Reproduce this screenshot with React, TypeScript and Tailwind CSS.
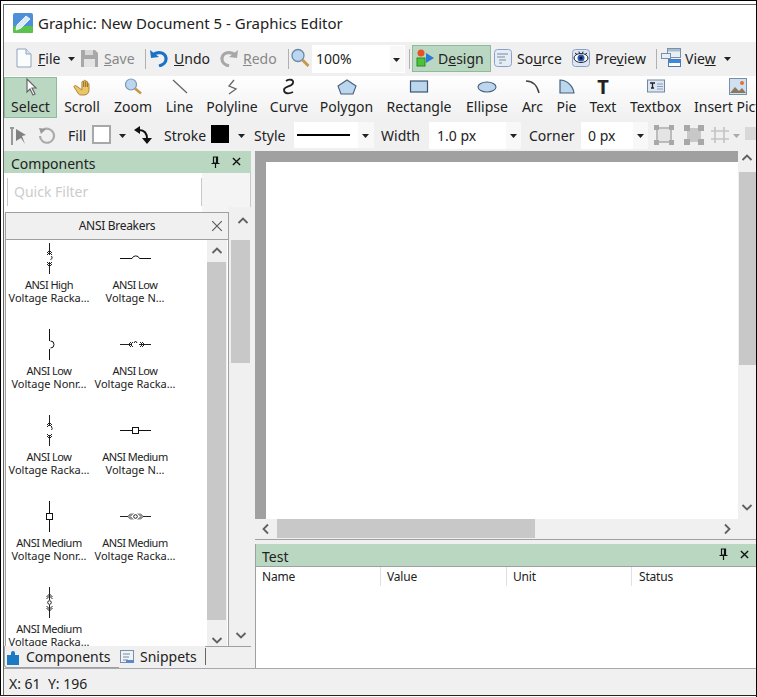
import React from "react";

const Chevron = ({ d, className }: { d: "u" | "d" | "l" | "r"; className: string }) => {
  const p = { u: "1.5,8 6,3.5 10.5,8", d: "1.5,4 6,8.5 10.5,4", l: "8,1.5 3.5,6 8,10.5", r: "4,1.5 8.5,6 4,10.5" }[d];
  return (
    <svg viewBox="0 0 12 12" className={"absolute w-[12px] h-[12px] " + className}>
      <polyline points={p} fill="none" stroke="#606060" strokeWidth="1.800" />
    </svg>
  );
};

const Caret = ({ className, color = "#222" }: { className: string; color?: string }) => (
  <svg viewBox="0 0 7 4" className={"absolute w-[7px] h-[4px] " + className}>
    <polygon points="0,0 7,0 3.500,4" fill={color} />
  </svg>
);

const Sep = ({ className }: { className: string }) => (
  <div className={"absolute w-px bg-[#b0b0b0] " + className} />
);

const Pin = ({ className }: { className: string }) => (
  <svg viewBox="0 0 9 12" className={"absolute w-[9px] h-[12px] " + className}>
    <path d="M2.500 1h4v6h-4zM5.500 1v6M0.500 7.500h8M4.500 8v4" fill="none" stroke="#111" strokeWidth="1.200" />
  </svg>
);

const Cross = ({ className, color = "#111", w = 1.5 }: { className: string; color?: string; w?: number }) => (
  <svg viewBox="0 0 10 10" className={"absolute " + className}>
    <path d="M1 1l8 8M9 1l-8 8" stroke={color} strokeWidth={w} fill="none" />
  </svg>
);

const tools = [
  { t: "Select", w: "w-[53px]", i: <svg viewBox="0 0 18 18" className="w-[18px] h-[18px]"><path d="M5 1v13l3-3 3 6 2-1-3-6h4z" fill="#fff" stroke="#666" strokeWidth="1.200" /></svg> },
  { t: "Scroll", w: "w-[50px]", i: <svg viewBox="0 0 18 18" className="w-[18px] h-[18px]"><path d="M1 9l4 6c1 2 2 2 4 2h2c3 0 5-2 5-5V6c0-1-1.500-1-1.500 0v3-5c0-1-1.800-1-1.800 0v5-6c0-1-2-1-2 0v6-5c0-1-1.800-1-1.800 0v8L3.500 8C2.500 7 0.500 8 1 9z" fill="#ecc566" stroke="#9a7428" strokeWidth="0.800" /></svg> },
  { t: "Zoom", w: "w-[52px]", i: <svg viewBox="0 0 20 18" className="w-[20px] h-[18px]"><circle cx="8" cy="6.500" r="5.500" fill="#bcd6f0" stroke="#7a98b8" strokeWidth="1.200" /><path d="M12 10.500l6 5" stroke="#c49a4a" strokeWidth="2.600" /></svg> },
  { t: "Line", w: "w-[41px]", i: <svg viewBox="0 0 18 18" className="w-[18px] h-[18px]"><path d="M2 2l14 13" stroke="#666" strokeWidth="1.300" /></svg> },
  { t: "Polyline", w: "w-[64px]", i: <svg viewBox="0 0 18 18" className="w-[18px] h-[18px]"><path d="M11 2L6 8l7 3-7 5" fill="none" stroke="#666" strokeWidth="1.300" /></svg> },
  { t: "Curve", w: "w-[50px]", i: <svg viewBox="0 0 18 18" className="w-[18px] h-[18px]"><path d="M6 3c3-2 8-2 7 2s-9 3-9 7 5 4 9 2" fill="none" stroke="#222" strokeWidth="1.800" /></svg> },
  { t: "Polygon", w: "w-[65px]", i: <svg viewBox="0 0 20 18" className="w-[20px] h-[18px]"><path d="M10 2l9 6-3 8H4L1 8z" fill="#bcd6ee" stroke="#44607e" strokeWidth="1.100" /></svg> },
  { t: "Rectangle", w: "w-[80px]", i: <svg viewBox="0 0 20 18" className="w-[20px] h-[18px]"><rect x="1.500" y="3" width="17" height="11" fill="#bcd6ee" stroke="#3c546e" strokeWidth="1.200" /></svg> },
  { t: "Ellipse", w: "w-[56px]", i: <svg viewBox="0 0 20 18" className="w-[20px] h-[18px]"><ellipse cx="10" cy="9" rx="9" ry="5" fill="#bcd6ee" stroke="#44607e" strokeWidth="1.100" /></svg> },
  { t: "Arc", w: "w-[35px]", i: <svg viewBox="0 0 18 18" className="w-[18px] h-[18px]"><path d="M2 3c6 0 11 4 13 12" fill="none" stroke="#444" strokeWidth="1.500" /></svg> },
  { t: "Pie", w: "w-[33px]", i: <svg viewBox="0 0 18 18" className="w-[18px] h-[18px]"><path d="M2 2c7 0 13 6 14 13H2z" fill="#bcd6ee" stroke="#44607e" strokeWidth="1.200" /></svg> },
  { t: "Text", w: "w-[40px]", i: <span className="w-[18px] h-[18px] flex items-center justify-center font-['Liberation_Serif',serif] font-bold text-[20px] leading-[18px] text-[#222]">T</span> },
  { t: "Textbox", w: "w-[65px]", i: <svg viewBox="0 0 20 18" className="w-[20px] h-[18px]"><rect x="1.500" y="2" width="17" height="12" fill="#dbe6f2" stroke="#70889e" /><path d="M4 5h5M6.500 5v5M5 10h3" stroke="#222" strokeWidth="1.300" /><path d="M11 6h6M11 8.500h6M11 11h6" stroke="#8aa0b8" /></svg> },
];

const items = [
  ["ANSI High", "Voltage Racka…"],
  ["ANSI Low", "Voltage N…"],
  ["ANSI Low", "Voltage Nonr…"],
  ["ANSI Low", "Voltage Racka…"],
  ["ANSI Low", "Voltage Racka…"],
  ["ANSI Medium", "Voltage N…"],
  ["ANSI Medium", "Voltage Nonr…"],
  ["ANSI Medium", "Voltage Racka…"],
  ["ANSI Medium", "Voltage Racka…"],
];

const Sym = ({ n }: { n: number }) => {
  const body: Record<number, React.ReactNode> = {
    0: <path d="M17.500 1v12M17.500 20v12M15 11l2.500-2.500L20 11M15 13l2.500-2.500L20 13M15 20l2.500 2.500L20 20M15 22l2.500 2.500L20 22M19.500 14q2 2-1 4" fill="none" stroke="#222" strokeWidth="1" />,
    1: <path d="M2 16.500h12a4 4 0 0 1 7.500 0H33" fill="none" stroke="#111" strokeWidth="1" />,
    2: <path d="M17.500 1v12M17.500 21v11M18.500 13a3.500 3.500 0 0 1 0 7" fill="none" stroke="#111" strokeWidth="1" />,
    3: <path d="M2 16.500h12M21 16.500h12M13 14l-2.500 2.500L13 19M15 14l-2.500 2.500L15 19M22 14l2.500 2.500L22 19M24 14l2.500 2.500L24 19M16 15l1.500-2 1.500 2" fill="none" stroke="#222" strokeWidth="1" />,
    4: <path d="M17.500 1v11M17.500 21v11M15 11l2.500-2.500L20 11M15 13l2.500-2.500L20 13M15 20l2.500 2.500L20 20M15 22l2.500 2.500L20 22M19.500 13q1.500 1.500 0 3" fill="none" stroke="#222" strokeWidth="1" />,
    5: <><path d="M2 16.500h12M21 16.500h12" stroke="#111" strokeWidth="1" /><rect x="14.500" y="13.500" width="6" height="6" fill="#fff" stroke="#111" strokeWidth="1" /></>,
    6: <><path d="M17.500 1v12M17.500 20v12" stroke="#111" strokeWidth="1" /><rect x="14.500" y="13.500" width="6" height="6" fill="#fff" stroke="#111" strokeWidth="1" /></>,
    7: <><path d="M2 16.500h8M25 16.500h8M13 13.500l-3 3 3 3M15 13.500l-3 3 3 3M22 13.500l3 3-3 3M20 13.500l3 3-3 3" fill="none" stroke="#222" strokeWidth="1" /><circle cx="17.500" cy="16.500" r="1.800" fill="#fff" stroke="#222" /></>,
    8: <><path d="M17.500 1v7M17.500 25v7M14.500 11l3-3 3 3M14.500 13l3-3 3 3M14.500 20l3 3 3-3M14.500 22l3 3 3-3M17.500 8v6M17.500 19v6" fill="none" stroke="#222" strokeWidth="1" /><circle cx="17.500" cy="16.500" r="1.800" fill="#fff" stroke="#222" /></>,
  };
  return (
    <svg viewBox="0 0 34 34" className="w-[34px] h-[34px] shrink-0">
      {body[n]}
    </svg>
  );
};

export default function App() {
  return (
    <div className="relative w-[757px] h-[697px] overflow-hidden bg-white font-['Noto_Sans','Liberation_Sans',sans-serif] text-[14px] leading-[20px] text-[#222]">
      {/* title bar */}
      <svg viewBox="0 0 20 20" className="absolute left-[13px] top-[13px] w-[20px] h-[20px]">
        <rect width="20" height="20" rx="2" fill="#4f8fd8" />
        <rect y="13" width="20" height="7" rx="1" fill="#5cc24f" />
        <path d="M3 17l1-5 9-9 4 3-9 9z" fill="#d8ecf8" stroke="#fff" strokeWidth="0.800" />
      </svg>
      <div className="absolute left-[38px] top-[13px] text-[15px] leading-[20px] whitespace-nowrap">Graphic: New Document 5 - Graphics Editor</div>

      {/* main toolbar */}
      <div className="absolute left-[4px] top-[42px] w-[753px] h-[34px] bg-[#f0f0f0]" />
      <svg viewBox="0 0 16 20" className="absolute left-[16px] top-[48px] w-[16px] h-[20px]">
        <path d="M1 1h9l5 5v13H1z" fill="#fbfcfe" stroke="#8ea4bc" />
        <path d="M10 1v5h5" fill="#dbe6f2" stroke="#8ea4bc" />
      </svg>
      <div className="absolute left-[38px] top-[49px]"><span className="underline">F</span>ile</div>
      <Caret className="left-[68px] top-[57px]" />
      <svg viewBox="0 0 17 17" className="absolute left-[81px] top-[50px] w-[17px] h-[17px]">
        <path d="M0 0h14l3 3v14H0z" fill="#a8a8a8" />
        <rect x="4" y="0" width="8" height="5" fill="#d8d8d8" />
        <rect x="3" y="9" width="11" height="8" fill="#e4e4e4" />
      </svg>
      <div className="absolute left-[104px] top-[49px] text-[#888]"><span className="underline">S</span>ave</div>
      <Sep className="left-[145px] top-[49px] h-[20px]" />
      <svg viewBox="0 0 20 18" className="absolute left-[149px] top-[49px] w-[20px] h-[18px]">
        <path d="M1 1l1 8 8-1z" fill="#1a72c8" />
        <path d="M4 6c4-4 12-3 13 3 .5 4-3 7-7 8" fill="none" stroke="#1a72c8" strokeWidth="3.200" />
      </svg>
      <div className="absolute left-[174px] top-[49px]"><span className="underline">U</span>ndo</div>
      <svg viewBox="0 0 20 18" className="absolute left-[219px] top-[49px] w-[20px] h-[18px]">
        <path d="M19 1l-1 8-8-1z" fill="#a8a8a8" />
        <path d="M16 6c-4-4-12-3-13 3-.5 4 3 7 7 8" fill="none" stroke="#a8a8a8" strokeWidth="3.200" />
      </svg>
      <div className="absolute left-[243px] top-[49px] text-[#888]"><span className="underline">R</span>edo</div>
      <Sep className="left-[288px] top-[49px] h-[20px]" />
      <svg viewBox="0 0 20 20" className="absolute left-[290px] top-[48px] w-[20px] h-[20px]">
        <circle cx="8" cy="7.500" r="6" fill="#bcd6f0" stroke="#6a88a8" strokeWidth="1.300" />
        <path d="M12.500 12l6 6" stroke="#c49a4a" strokeWidth="3" />
      </svg>
      <div className="absolute left-[312px] top-[45px] w-[77px] h-[28px] bg-white pl-[4px] pt-[4px]">100%</div>
      <div className="absolute left-[389px] top-[45px] w-[16px] h-[28px] bg-[#f8f8f8] border border-white" />
      <Caret className="left-[393px] top-[58px]" />
      <Sep className="left-[409px] top-[49px] h-[20px]" />
      <div className="absolute left-[412px] top-[45px] w-[79px] h-[27px] bg-[#bad7c1] border border-[#8cbc9a]" />
      <svg viewBox="0 0 18 18" className="absolute left-[416px] top-[49px] w-[18px] h-[18px]">
        <circle cx="5" cy="4" r="3.500" fill="#e8502a" />
        <rect x="1" y="9" width="8" height="8" fill="#4ec23a" stroke="#2a8a22" />
        <path d="M10 4l8 5-8 5z" fill="#2a7ad8" />
      </svg>
      <div className="absolute left-[438px] top-[49px]">D<span className="underline">e</span>sign</div>
      <svg viewBox="0 0 18 18" className="absolute left-[494px] top-[49px] w-[18px] h-[18px]">
        <rect x="0.500" y="0.500" width="17" height="17" rx="3" fill="#e4ecf6" stroke="#8aa0c8" />
        <path d="M3 5h11M3 8h8M5 11h7M5 14h3" stroke="#7a8a9a" />
      </svg>
      <div className="absolute left-[517px] top-[49px]">So<span className="underline">u</span>rce</div>
      <svg viewBox="0 0 18 18" className="absolute left-[572px] top-[49px] w-[18px] h-[18px]">
        <rect x="0.500" y="0.500" width="17" height="17" rx="3" fill="#dde6f4" stroke="#8aa0c8" />
        <ellipse cx="9" cy="9" rx="7" ry="4.500" fill="#fff" stroke="#222" />
        <circle cx="9" cy="9" r="3.500" fill="#2a5ab8" />
        <circle cx="9" cy="9" r="1.500" fill="#111" />
        <path d="M3 4l2 1.500M7 2.500l.5 2M11 2.500l-.5 2M15 4l-2 1.500" stroke="#222" />
      </svg>
      <div className="absolute left-[595px] top-[49px]">Pre<span className="underline">v</span>iew</div>
      <Sep className="left-[656px] top-[49px] h-[20px]" />
      <svg viewBox="0 0 20 19" className="absolute left-[661px] top-[48px] w-[20px] h-[19px]">
        <rect x="6.500" y="0.500" width="13" height="9" fill="#e8eef6" stroke="#7a90a8" />
        <rect x="7" y="1" width="12" height="2.500" fill="#a8bcd0" />
        <rect x="0.500" y="5.500" width="9" height="5" fill="#e8eef6" stroke="#7a90a8" />
        <rect x="7.500" y="11.500" width="12" height="7" fill="#fff" stroke="#4a7ab8" />
        <rect x="8" y="12" width="11" height="3" fill="#3a8ae0" />
      </svg>
      <div className="absolute left-[685px] top-[49px]">Vie<span className="underline">w</span></div>
      <Caret className="left-[724px] top-[57px]" />

      {/* tool row */}
      <div className="absolute left-[4px] top-[76px] w-[753px] h-[44px] bg-gradient-to-b from-white to-[#f0f0f0]" />
      <div className="absolute left-[4px] top-[77px] h-[42px] w-[760px] flex">
        {tools.map((x, i) => (
          <div key={x.t} className={"flex flex-col items-center shrink-0 h-[41px] " + x.w + (i === 0 ? " bg-[#bad7c1] border border-[#8cbc9a]" : " pt-[1px]")}>
            <div className="h-[18px] flex items-center justify-center">{x.i}</div>
            <div className="text-[14px] leading-[20px] whitespace-nowrap mt-[1px]">{x.t}</div>
          </div>
        ))}
        <div className="flex flex-col shrink-0 pl-[6px] h-[41px] pt-[1px]">
          <div className="h-[18px] flex items-center justify-center">
            <svg viewBox="0 0 18 18" className="w-[18px] h-[18px]">
              <rect x="0.500" y="0.500" width="17" height="16" fill="#cfe0f2" stroke="#7a90a8" />
              <path d="M1 15l5-6 4 4 3-3 4 5z" fill="#8a7a5a" />
              <circle cx="13" cy="5" r="2" fill="#e8702a" />
            </svg>
          </div>
          <div className="whitespace-nowrap mt-[1px]">Insert Picture</div>
        </div>
      </div>

      {/* style row */}
      <div className="absolute left-[4px] top-[120px] w-[753px] h-[31px] bg-[#f0f0f0]" />
      <svg viewBox="0 0 18 18" className="absolute left-[9px] top-[127px] w-[18px] h-[18px]">
        <path d="M1 1h4M3 1v17" stroke="#999" strokeWidth="2" />
        <path d="M7 2l10 6-4 1 3 8-4-6-5 3z" fill="#808080" />
      </svg>
      <svg viewBox="0 0 18 18" className="absolute left-[38px] top-[127px] w-[18px] h-[18px]">
        <path d="M5 3a7 7 0 1 1-3 6" fill="none" stroke="#aaa" strokeWidth="2.200" />
        <path d="M1 1l7 1-5 5z" fill="#999" />
      </svg>
      <div className="absolute left-[68px] top-[126px]">Fill</div>
      <div className="absolute left-[92px] top-[125px] w-[19px] h-[19px] bg-white border-2 border-[#a8a8a8]" />
      <Caret className="left-[119px] top-[134px]" />
      <svg viewBox="0 0 18 18" className="absolute left-[134px] top-[126px] w-[18px] h-[18px]">
        <path d="M5 4c5 0 8 3 8 9" fill="none" stroke="#111" strokeWidth="2" />
        <path d="M0 4l6-4v8zM13 18l-5-6h10z" fill="#111" />
      </svg>
      <div className="absolute left-[164px] top-[126px]">Stroke</div>
      <div className="absolute left-[211px] top-[125px] w-[18px] h-[18px] bg-black" />
      <Caret className="left-[238px] top-[134px]" />
      <div className="absolute left-[254px] top-[126px]">Style</div>
      <div className="absolute left-[294px] top-[122px] w-[64px] h-[26px] bg-white" />
      <div className="absolute left-[297px] top-[134px] w-[53px] h-[2px] bg-black" />
      <div className="absolute left-[358px] top-[122px] w-[16px] h-[26px] bg-[#f8f8f8]" />
      <Caret className="left-[362px] top-[134px]" />
      <div className="absolute left-[381px] top-[126px]">Width</div>
      <div className="absolute left-[429px] top-[122px] w-[77px] h-[27px] bg-white pl-[8px] pt-[4px]">1.0 px</div>
      <div className="absolute left-[506px] top-[122px] w-[15px] h-[27px] bg-[#f8f8f8]" />
      <Caret className="left-[510px] top-[134px]" />
      <div className="absolute left-[529px] top-[126px]">Corner</div>
      <div className="absolute left-[581px] top-[122px] w-[52px] h-[27px] bg-white pl-[7px] pt-[4px]">0 px</div>
      <div className="absolute left-[633px] top-[122px] w-[15px] h-[27px] bg-[#f8f8f8]" />
      <Caret className="left-[637px] top-[134px]" />
      <svg viewBox="0 0 20 20" className="absolute left-[654px] top-[125px] w-[20px] h-[20px]">
        <rect x="3" y="3" width="14" height="14" fill="#e4e4e4" stroke="#bbb" strokeWidth="2" />
        <path d="M0 0h5v5H0zM15 0h5v5h-5zM0 15h5v5H0zM15 15h5v5h-5z" fill="#a8a8a8" />
      </svg>
      <svg viewBox="0 0 20 20" className="absolute left-[684px] top-[125px] w-[20px] h-[20px]">
        <rect x="3" y="3" width="14" height="14" fill="#c8c8c8" />
        <path d="M0 0h6v6H0zM14 0h6v6h-6zM0 14h6v6H0zM14 14h6v6h-6z" fill="#a8a8a8" />
      </svg>
      <svg viewBox="0 0 20 20" className="absolute left-[710px] top-[125px] w-[20px] h-[20px]">
        <path d="M5 2v16M14 2v16M1 6h18M1 14h18" stroke="#c4c4c4" strokeWidth="1.600" />
      </svg>
      <Caret className="left-[733px] top-[134px]" color="#aaa" />
      <div className="absolute left-[745px] top-[127px] w-[11px] h-[13px] bg-[#d8d8d8]" />

      {/* components panel */}
      <div className="absolute left-[4px] top-[151px] w-[251px] h-[517px] bg-[#f0f0f0]" />
      <div className="absolute left-[4px] top-[151px] w-[247px] h-[22px] bg-[#bad7c1]" />
      <div className="absolute left-[11px] top-[154px]">Components</div>
      <Pin className="left-[211px] top-[156px]" />
      <Cross className="left-[232px] top-[157px] w-[9px] h-[9px]" />
      <div className="absolute left-[4px] top-[173px] w-[247px] h-[40px] bg-white" />
      <div className="absolute left-[7px] top-[178px] w-px h-[28px] bg-[#c8c8c8]" />
      <div className="absolute left-[201px] top-[178px] w-px h-[28px] bg-[#c8c8c8]" />
      <div className="absolute left-[250px] top-[173px] w-px h-[34px] bg-[#c8c8c8]" />
      <div className="absolute left-[8px] top-[178px] w-[190px] h-[27px] bg-white pl-[6px] pt-[4px] text-[#ccc]">Quick Filter</div>
      <div className="absolute left-[202px] top-[173px] w-[48px] h-[40px] bg-[#f4f4f4]" />

      {/* outer scrollbar */}
      <div className="absolute left-[229px] top-[207px] w-[22px] h-[439px] bg-[#f0f0f0]" />
      <Chevron d="u" className="left-[237px] top-[215px]" />
      <div className="absolute left-[231px] top-[240px] w-[19px] h-[123px] bg-[#c8c8c8]" />
      <Chevron d="d" className="left-[235px] top-[629px]" />

      {/* list */}
      <div className="absolute left-[5px] top-[212px] w-[224px] h-[434px] border border-[#a0a0a0] border-b-0 bg-white overflow-hidden">
        <div className="h-[27px] bg-[#f0f0f0] border-b border-[#a0a0a0] text-[12px] leading-[26px] tracking-[-0.3px] text-center">ANSI Breakers</div>
        <Cross className="left-[205px] top-[7px] w-[12px] h-[12px]" color="#555" w={0.9} />
        <div className="absolute left-0 top-[29px] w-[172px] grid grid-cols-[86px_86px] auto-rows-[86px]">
          {items.map((x, i) => (
            <div key={i} className="flex flex-col items-center w-[86px] text-[11px] leading-[13px] text-center whitespace-nowrap">
              <Sym n={i} />
              <div className="mt-[2px] tracking-[-0.5px]">{x[0]}</div>
              <div>{x[1]}</div>
            </div>
          ))}
        </div>
        <div className="absolute left-[201px] top-[27px] w-[20px] h-[407px] bg-[#f0f0f0]" />
        <Chevron d="u" className="left-[205px] top-[32px]" />
        <div className="absolute left-[201px] top-[49px] w-[19px] h-[358px] bg-[#c8c8c8]" />
        <Chevron d="d" className="left-[205px] top-[421px]" />
      </div>

      {/* tabs */}
      <div className="absolute left-[4px] top-[646px] w-[247px] h-[22px] bg-[#f0f0f0]" />
      <div className="absolute left-[205px] top-[646px] w-[46px] h-px bg-[#a0a0a0]" />
      <div className="absolute left-[4px] top-[646px] w-[115px] h-[22px] border-l border-b border-[#a0a0a0] rounded-bl-[3px]" />
      <svg viewBox="0 0 13 14" className="absolute left-[7px] top-[651px] w-[13px] h-[14px]">
        <path d="M0 4h4V2a2 2 0 0 1 4 0v2h4v10H0z" fill="#1c7ac4" />
      </svg>
      <div className="absolute left-[26px] top-[647px]">Components</div>
      <svg viewBox="0 0 15 14" className="absolute left-[120px] top-[650px] w-[15px] h-[14px]">
        <rect x="0.500" y="0.500" width="13" height="12" fill="#eef3f8" stroke="#7a90a8" />
        <path d="M3 4h7M3 7h6M3 10h5" stroke="#7a8a9a" />
        <rect x="6" y="10" width="8" height="3" fill="#5a8ac8" />
      </svg>
      <div className="absolute left-[140px] top-[647px]">Snippets</div>
      <div className="absolute left-[205px] top-[648px] w-px h-[17px] bg-[#666]" />

      {/* canvas */}
      <div className="absolute left-[255px] top-[151px] w-[502px] h-[368px] bg-[#a0a0a0]" />
      <div className="absolute left-[266px] top-[162px] w-[472px] h-[357px] bg-white" />
      <div className="absolute left-[738px] top-[151px] w-[19px] h-[368px] bg-[#f0f0f0]" />
      <Chevron d="u" className="left-[741px] top-[152px]" />
      <div className="absolute left-[739px] top-[172px] w-[18px] h-[193px] bg-[#c8c8c8]" />
      <Chevron d="d" className="left-[741px] top-[501px]" />
      <div className="absolute left-[255px] top-[519px] w-[502px] h-[20px] bg-[#f0f0f0]" />
      <Chevron d="l" className="left-[260px] top-[523px]" />
      <div className="absolute left-[277px] top-[519px] w-[258px] h-[19px] bg-[#c8c8c8]" />
      <Chevron d="r" className="left-[721px] top-[523px]" />
      <div className="absolute left-[255px] top-[539px] w-[502px] h-[5px] bg-[#f0f0f0] border-t border-[#a0a0a0]" />

      {/* test panel */}
      <div className="absolute left-[255px] top-[544px] w-px h-[124px] bg-[#a0a0a0]" />
      <div className="absolute left-[256px] top-[544px] w-[501px] h-[23px] bg-[#bad7c1] border-b border-[#a0a0a0]" />
      <div className="absolute left-[262px] top-[547px]">Test</div>
      <Pin className="left-[719px] top-[548px]" />
      <Cross className="left-[740px] top-[550px] w-[9px] h-[9px]" />
      <div className="absolute left-[256px] top-[567px] w-[501px] h-[101px] bg-white flex text-[12px] leading-[19px] tracking-[-0.2px] text-[#222]">
        <div className="w-[125px] h-[19px] pl-[6px] border-r border-[#e0e0e0]">Name</div>
        <div className="w-[126px] h-[19px] pl-[6px] border-r border-[#e0e0e0]">Value</div>
        <div className="w-[125px] h-[19px] pl-[6px] border-r border-[#e0e0e0]">Unit</div>
        <div className="w-[125px] h-[19px] pl-[7px]">Status</div>
      </div>

      {/* status */}
      <div className="absolute left-[4px] top-[668px] w-[753px] h-[27px] bg-[#f0f0f0] border-t border-[#a8a8b0]" />
      <div className="absolute left-[9px] top-[674px] whitespace-pre">X: 61  Y: 196</div>

      {/* window frame */}
      <div className="absolute left-0 top-0 w-[757px] h-[1px] bg-black" />
      <div className="absolute left-0 top-0 w-[1px] h-[696px] bg-black" />
      <div className="absolute left-[756px] top-0 w-[1px] h-[697px] bg-black" />
      <div className="absolute left-[3px] top-[4px] w-[753px] h-[1px] bg-[#666]" />
      <div className="absolute left-[3px] top-[4px] w-[1px] h-[691px] bg-[#666]" />
      <div className="absolute left-0 top-[695px] w-[757px] h-[1px] bg-[#222]" />
    </div>
  );
}
